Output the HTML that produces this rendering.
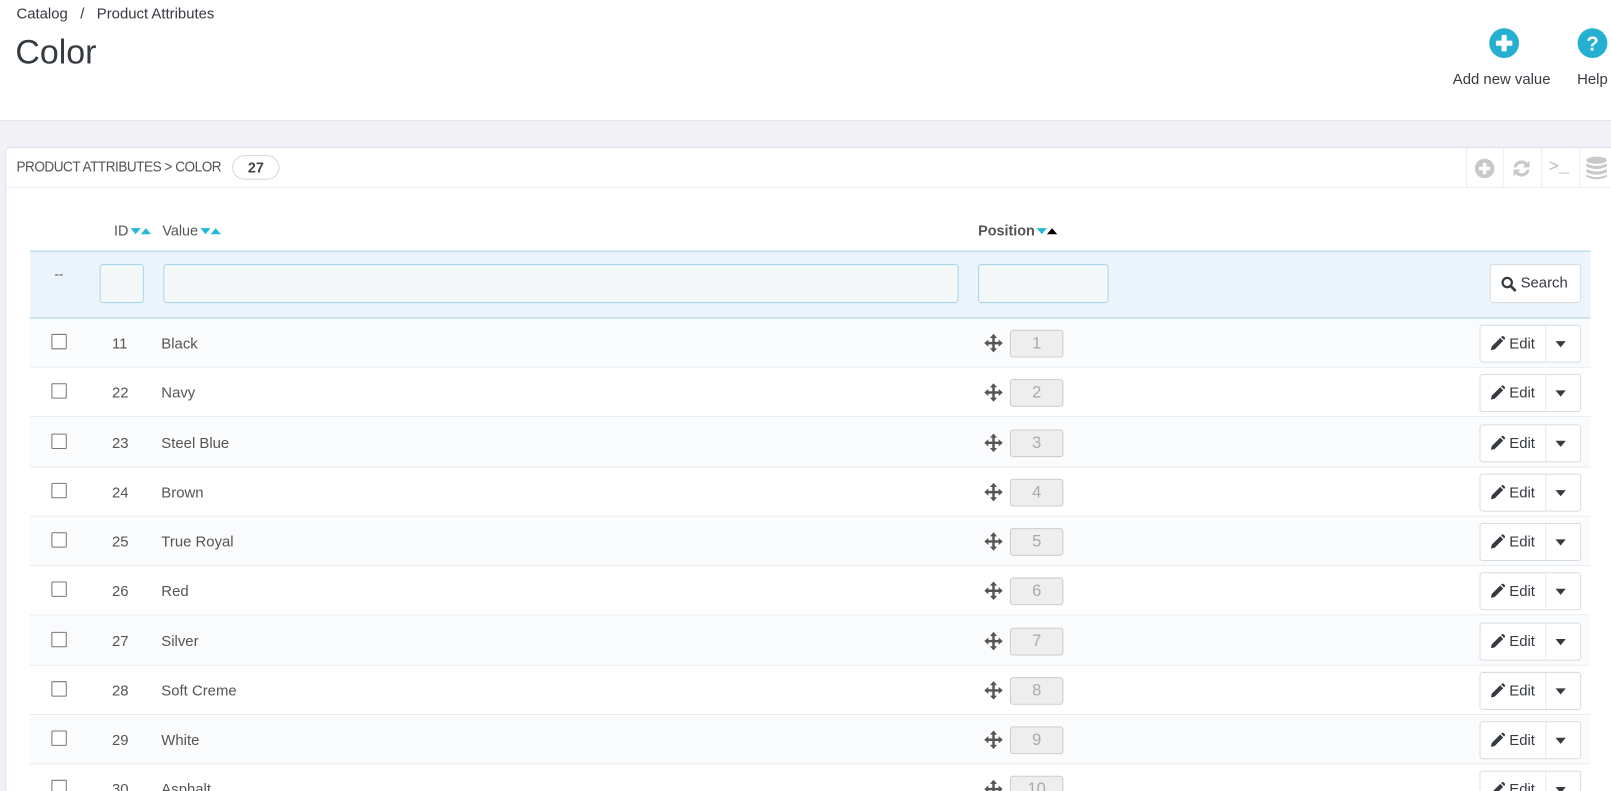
<!DOCTYPE html>
<html><head><meta charset="utf-8">
<style>
html,body{margin:0;padding:0;width:1611px;height:791px;overflow:hidden;background:#fff;}
#w{position:absolute;left:0;top:0;width:1568px;height:770px;transform:scale(1.02742);transform-origin:0 0;font-family:"Liberation Sans","DejaVu Sans",sans-serif;color:#363a41;overflow:hidden;}
.abs{position:absolute;}
#head{left:0;top:0;width:1568px;height:117px;background:#fff;border-bottom:1px solid #dcdce4;}
#bg{left:0;top:118px;width:1568px;height:652px;background:#f1f1f6;}
#panel{left:5px;top:143px;width:1600px;height:640px;background:#fff;border:1px solid #dfe3ea;border-radius:5px;}
.hdr{font-size:14px;color:#555;}
.th{font-size:14px;color:#555;top:216px;}
.car{display:inline-block;width:0;height:0;border-left:5.5px solid transparent;border-right:5.5px solid transparent;vertical-align:middle;margin-left:2px;}
.dn{border-top:6px solid #25b9d7;}
.up{border-bottom:6px solid #25b9d7;}
.inp{background:#f5f8f9;border:1px solid #a9d5eb;border-radius:3px;top:257px;height:36px;}
.row{left:29px;width:1519px;height:47px;border-bottom:1px solid #e8ebee;}
.cb{left:21px;width:13px;height:13px;border:1px solid #777;border-radius:1px;background:#fff;}
.txt{font-size:14.5px;color:#555;}
.pos{left:954px;width:50px;height:25px;background:#eee;border:1px solid #cdcdcd;border-radius:3px;text-align:center;font-size:16px;color:#aaa;line-height:25px;}
.btn{left:1411px;width:97px;height:35px;border:1px solid #d8dde2;border-radius:3px;background:#fff;}
</style></head><body><div id="w">
<div id="head" class="abs"></div>
<div class="abs" style="left:16px;top:6px;font-size:14.5px;color:#363a41;">Catalog &nbsp;&nbsp;/ &nbsp;&nbsp;Product Attributes</div>
<div class="abs" style="left:15px;top:32px;font-size:33px;color:#363a41;">Color</div>
<svg class="abs" style="left:1449px;top:27px" width="30" height="30" viewBox="0 0 30 30"><circle cx="15" cy="15" r="14.5" fill="#25b0d2"/><rect x="12.5" y="7" width="5" height="16" fill="#fff" rx="1"/><rect x="7" y="12.5" width="16" height="5" fill="#fff" rx="1"/></svg>
<div class="abs" style="left:1414px;top:70px;font-size:14.5px;">Add new value</div>
<svg class="abs" style="left:1535px;top:27px" width="30" height="30" viewBox="0 0 30 30"><circle cx="15" cy="15" r="14.5" fill="#25b0d2"/><text x="15" y="22" text-anchor="middle" font-family="Liberation Sans" font-weight="bold" font-size="20" fill="#fff">?</text></svg>
<div class="abs" style="left:1535px;top:70px;font-size:14.5px;">Help</div>
<div id="bg" class="abs"></div>
<div id="panel" class="abs"></div>
<div class="abs hdr" style="left:16px;top:155px;font-size:14.5px;letter-spacing:-0.5px;white-space:nowrap;transform:scaleX(0.91);transform-origin:0 0;">PRODUCT ATTRIBUTES &gt; COLOR</div>
<div class="abs" style="left:226px;top:151px;width:44px;height:22px;border:1px solid #d6d6d6;border-radius:12px;text-align:center;font-size:14px;font-weight:bold;line-height:22px;color:#444;">27</div>
<div class="abs" style="left:5px;top:182px;width:1563px;height:1px;background:#eceef0"></div>
<div class="abs" style="left:1427px;top:144px;width:1px;height:38px;background:#eceef0"></div>
<div class="abs" style="left:1463px;top:144px;width:1px;height:38px;background:#eceef0"></div>
<div class="abs" style="left:1500px;top:144px;width:1px;height:38px;background:#eceef0"></div>
<div class="abs" style="left:1537px;top:144px;width:1px;height:38px;background:#eceef0"></div>
<svg class="abs" style="left:1435px;top:154px" width="20" height="20" viewBox="0 0 20 20"><circle cx="10" cy="10" r="9.5" fill="#c8c8c8"/><rect x="8.3" y="4.5" width="3.4" height="11" fill="#fff"/><rect x="4.5" y="8.3" width="11" height="3.4" fill="#fff"/></svg>
<svg class="abs" style="left:1470px;top:153px" width="22" height="22" viewBox="0 0 20 20"><path d="M3 9 A7 7 0 0 1 15 5 L17 3 L17 9 L11 9 L13 7 A4.5 4.5 0 0 0 5.5 9 Z M17 11 A7 7 0 0 1 5 15 L3 17 L3 11 L9 11 L7 13 A4.5 4.5 0 0 0 14.5 11 Z" fill="#c8c8c8"/></svg>
<div class="abs" style="left:1507px;top:154px;font-size:17px;color:#bbb;font-family:'Liberation Mono',monospace;">&gt;_</div>
<svg class="abs" style="left:1543px;top:152px" width="22" height="24" viewBox="0 0 22 24"><ellipse cx="11" cy="4" rx="10" ry="3.5" fill="#c8c8c8"/><path d="M1 7 Q11 12 21 7 V10 Q11 15 1 10Z M1 12.5 Q11 17.5 21 12.5 V15.5 Q11 20.5 1 15.5Z M1 18 Q11 23 21 18 V20 Q11 25 1 20Z" fill="#c8c8c8"/></svg>

<div class="abs th" style="left:111px;">ID<span class="car dn"></span><span class="car up" style="margin-left:0"></span></div>
<div class="abs th" style="left:158px;">Value<span class="car dn"></span><span class="car up" style="margin-left:0"></span></div>
<div class="abs th" style="left:952px;font-weight:bold;">Position<span class="car dn"></span><span class="car" style="margin-left:0;border-bottom:6px solid #000"></span></div>

<div class="abs" style="left:29px;top:244px;width:1519px;height:64px;background:#ecf5fb;border-top:1px solid #a6d3ea;border-bottom:1px solid #a6d3ea;"></div>
<div class="abs" style="left:53px;top:259px;font-size:13px;color:#555;">--</div>
<div class="abs inp" style="left:97px;width:41px;"></div>
<div class="abs inp" style="left:159px;width:772px;"></div>
<div class="abs inp" style="left:952px;width:125px;"></div>
<div class="abs" style="left:1450px;top:257px;width:87px;height:36px;background:#fff;border:1px solid #d8dde2;border-radius:3px;font-size:14.5px;line-height:37px;color:#363a41;"><svg style="position:absolute;left:10px;top:11px" width="15" height="15" viewBox="0 0 15 15"><circle cx="6" cy="6" r="4.5" fill="none" stroke="#363a41" stroke-width="2.2"/><path d="M9.3 9.3 L13.5 13.5" stroke="#363a41" stroke-width="2.6" stroke-linecap="round"/></svg><span style="position:absolute;left:29px;">Search</span></div>

<div id="rows"></div>
<script>
var d=[[11,"Black"],[22,"Navy"],[23,"Steel Blue"],[24,"Brown"],[25,"True Royal"],[26,"Red"],[27,"Silver"],[28,"Soft Creme"],[29,"White"],[30,"Asphalt"]];
var h="";
for(var i=0;i<d.length;i++){
 var t=310+i*48.25;
 h+='<div class="abs row" style="top:'+t+'px;background:'+(i%2==0?'#fafbfd':'#fff')+'">'+
 '<div class="abs cb" style="top:15px"></div>'+
 '<div class="abs txt" style="left:80px;top:17px">'+d[i][0]+'</div>'+
 '<div class="abs txt" style="left:128px;top:17px">'+d[i][1]+'</div>'+
 '<svg class="abs" style="left:929px;top:15px" width="18" height="18" viewBox="0 0 18 18"><path d="M9 0 L12.5 4 H10.2 V7.8 H14 V5.5 L18 9 L14 12.5 V10.2 H10.2 V14 H12.5 L9 18 L5.5 14 H7.8 V10.2 H4 V12.5 L0 9 L4 5.5 V7.8 H7.8 V4 H5.5Z" fill="#555"/></svg>'+
 '<div class="abs pos" style="top:11px">'+(i+1)+'</div>'+
 '<div class="abs btn" style="top:6px"><div class="abs" style="left:63px;top:0;width:1px;height:35px;background:#e6e9ec"></div>'+
 '<svg class="abs" style="left:9px;top:10px" width="15" height="15" viewBox="0 0 14 14"><path d="M1 13 L1.8 9.5 L9.5 1.8 L12.2 4.5 L4.5 12.2Z M10.3 1 L11.2 0.2 Q12 -0.2 12.8 0.6 L13.4 1.2 Q14.2 2 13.8 2.8 L13 3.7Z" fill="#363a41"/></svg>'+
 '<div class="abs" style="left:28px;top:10px;font-size:14.5px;color:#363a41">Edit</div>'+
 '<div class="abs" style="left:73px;top:15px;width:0;height:0;border-left:5.5px solid transparent;border-right:5.5px solid transparent;border-top:6px solid #363a41"></div></div>'+
 '</div>';
}
document.getElementById("rows").innerHTML=h;
</script>
</div></body></html>
